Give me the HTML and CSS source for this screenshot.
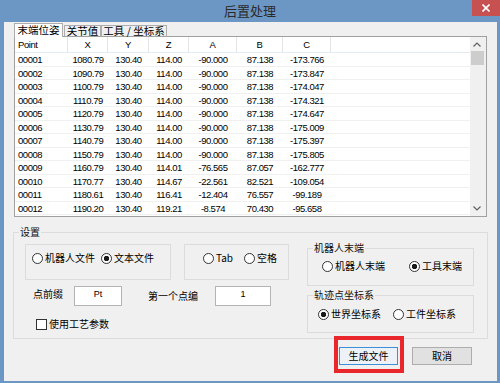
FILE: index.html
```html
<!DOCTYPE html>
<html>
<head>
<meta charset="utf-8">
<link rel="stylesheet" href="styles.css">
</head>
<body>
<div class="window">
  <div class="titlebar">
    <div class="title">后置处理</div>
    <div class="close"><svg width="8" height="8" viewBox="0 0 8 8"><path d="M0.5 0.5L7.5 7.5M7.5 0.5L0.5 7.5" stroke="#fff" stroke-width="1.6"/></svg></div>
  </div>
  <div class="client">
    <div class="tabs">
      <div class="tab active">末端位姿</div>
      <div class="tab t2">关节值</div>
      <div class="tab t3">工具 / 坐标系</div>
    </div>
    <div class="listview">
      <div class="lv-main">
        <div class="lv-head">
          <div class="hc first">Point</div><div class="hc">X</div><div class="hc">Y</div><div class="hc">Z</div><div class="hc">A</div><div class="hc">B</div><div class="hc">C</div><div class="hc fill"></div>
        </div>
        <div class="row"><div class="c first">00001</div><div class="c">1080.79</div><div class="c">130.40</div><div class="c">114.00</div><div class="c">-90.000</div><div class="c">87.138</div><div class="c">-173.766</div><div></div></div>
        <div class="row"><div class="c first">00002</div><div class="c">1090.79</div><div class="c">130.40</div><div class="c">114.00</div><div class="c">-90.000</div><div class="c">87.138</div><div class="c">-173.847</div><div></div></div>
        <div class="row"><div class="c first">00003</div><div class="c">1100.79</div><div class="c">130.40</div><div class="c">114.00</div><div class="c">-90.000</div><div class="c">87.138</div><div class="c">-174.047</div><div></div></div>
        <div class="row"><div class="c first">00004</div><div class="c">1110.79</div><div class="c">130.40</div><div class="c">114.00</div><div class="c">-90.000</div><div class="c">87.138</div><div class="c">-174.321</div><div></div></div>
        <div class="row"><div class="c first">00005</div><div class="c">1120.79</div><div class="c">130.40</div><div class="c">114.00</div><div class="c">-90.000</div><div class="c">87.138</div><div class="c">-174.647</div><div></div></div>
        <div class="row"><div class="c first">00006</div><div class="c">1130.79</div><div class="c">130.40</div><div class="c">114.00</div><div class="c">-90.000</div><div class="c">87.138</div><div class="c">-175.009</div><div></div></div>
        <div class="row"><div class="c first">00007</div><div class="c">1140.79</div><div class="c">130.40</div><div class="c">114.00</div><div class="c">-90.000</div><div class="c">87.138</div><div class="c">-175.397</div><div></div></div>
        <div class="row"><div class="c first">00008</div><div class="c">1150.79</div><div class="c">130.40</div><div class="c">114.00</div><div class="c">-90.000</div><div class="c">87.138</div><div class="c">-175.805</div><div></div></div>
        <div class="row"><div class="c first">00009</div><div class="c">1160.79</div><div class="c">130.40</div><div class="c">114.01</div><div class="c">-76.565</div><div class="c">87.057</div><div class="c">-162.777</div><div></div></div>
        <div class="row"><div class="c first">00010</div><div class="c">1170.77</div><div class="c">130.40</div><div class="c">114.67</div><div class="c">-22.561</div><div class="c">82.521</div><div class="c">-109.054</div><div></div></div>
        <div class="row"><div class="c first">00011</div><div class="c">1180.61</div><div class="c">130.40</div><div class="c">116.41</div><div class="c">-12.404</div><div class="c">76.557</div><div class="c">-99.189</div><div></div></div>
        <div class="row"><div class="c first">00012</div><div class="c">1190.20</div><div class="c">130.40</div><div class="c">119.21</div><div class="c">-8.574</div><div class="c">70.430</div><div class="c">-95.658</div><div></div></div>
      </div>
      <div class="scrollbar">
        <div class="sb-up"><svg width="8" height="5" viewBox="0 0 8 5"><path d="M0.5 4.5L4 1L7.5 4.5" fill="none" stroke="#606060" stroke-width="1.2"/></svg></div>
        <div class="sb-thumb"></div>
        <div class="sb-track"></div>
        <div class="sb-down"><svg width="8" height="5" viewBox="0 0 8 5"><path d="M0.5 0.5L4 4L7.5 0.5" fill="none" stroke="#606060" stroke-width="1.2"/></svg></div>
      </div>
    </div>

    <fieldset class="settings">
      <legend>设置</legend>
      <div class="settings-body">
        <div class="left">
          <div class="box-row">
            <div class="box box-file">
              <span class="radio"><span class="rb"></span>机器人文件</span>
              <span class="radio r-second"><span class="rb on"></span>文本文件</span>
            </div>
            <div class="box box-sep">
              <span class="radio"><span class="rb"></span>Tab</span>
              <span class="radio r-space"><span class="rb"></span>空格</span>
            </div>
          </div>
          <div class="field-row">
            <span class="lbl lbl1">点前缀</span>
            <span class="input in1">Pt</span>
            <span class="lbl lbl2">第一个点编</span>
            <span class="input in2">1</span>
          </div>
          <div class="check-row"><span class="cb"></span>使用工艺参数</div>
        </div>
        <div class="right">
          <fieldset class="grp grp1">
            <legend>机器人末端</legend>
            <div class="grp-body g1">
              <span class="radio"><span class="rb"></span>机器人末端</span>
              <span class="radio r-tool"><span class="rb on"></span>工具末端</span>
            </div>
          </fieldset>
          <fieldset class="grp grp2">
            <legend>轨迹点坐标系</legend>
            <div class="grp-body g2">
              <span class="radio"><span class="rb on"></span>世界坐标系</span>
              <span class="radio r-work"><span class="rb"></span>工件坐标系</span>
            </div>
          </fieldset>
        </div>
      </div>
    </fieldset>

    <div class="buttons">
      <div class="btn-wrap">
        <div class="btn primary">生成文件</div>
        <div class="highlight"></div>
      </div>
      <div class="btn">取消</div>
    </div>
  </div>
</div>
</body>
</html>
```
FILE: styles.css
```css
* { box-sizing: border-box; }
html, body { margin: 0; padding: 0; }
body {
  width: 500px;
  height: 383px;
  overflow: hidden;
  font-family: "Noto Sans CJK SC", "Noto Sans", sans-serif;
  font-size: 10px;
  color: #000;
}
.window {
  width: 500px;
  height: 383px;
  background: #6c97c5;
  display: flex;
  flex-direction: column;
}
.titlebar {
  height: 22px;
  flex: none;
  display: grid;
  grid-template-columns: 1fr auto 1fr;
}
.title {
  grid-column: 2;
  font-size: 13px;
  line-height: 22px;
  color: #2a2a2a;
}
.close {
  grid-column: 3;
  justify-self: end;
  align-self: start;
  width: 28px;
  height: 16px;
  background: #c75050;
  display: flex;
  align-items: center;
  justify-content: center;
}
.client {
  flex: 1;
  margin: 0 3px 2px 4px;
  background: #f0f0f0;
  display: flex;
  flex-direction: column;
}

/* tabs */
.tabs {
  display: flex;
  align-items: flex-start;
  height: 14px;
  margin: 1px 0 0 10px;
  position: relative;
  z-index: 1;
  flex: none;
}
.tab {
  height: 11px;
  margin-top: 2px;
  border: 1px solid #adadad;
  border-bottom: none;
  background: #f0f0f0;
  text-align: center;
  font-size: 10.5px;
  line-height: 10px;
  white-space: nowrap;
}
.tab.active {
  width: 49px;
  height: 14px;
  margin-top: 0;
  background: #fff;
  line-height: 12px;
}
.tab.t2 { width: 37px; margin-left: 1px; }
.tab.t3 { width: 66px; }

/* list view */
.listview {
  flex: none;
  margin: -1px 0 0 10px;
  width: 473px;
  height: 181px;
  border: 1px solid #a0a0a0;
  background: #fff;
  display: flex;
}
.lv-main {
  flex: 1;
  display: flex;
  flex-direction: column;
  font-family: "Liberation Sans", Arial, sans-serif;
  font-size: 9.5px;
  letter-spacing: -0.45px;
}
.lv-head, .row {
  display: grid;
  grid-template-columns: 53px 40px 41px 40px 48px 46px 48px 1fr;
}
.lv-head {
  height: 16px;
  border-bottom: 1px solid #e3eaf3;
}
.hc {
  border-right: 1px solid #e5e5e5;
  text-align: center;
  line-height: 15px;
  color: #000;
}
.hc.fill { border-right: none; }
.hc.first, .c.first { text-align: left; padding-left: 3px; }
.row {
  height: 13.5px;
  border-bottom: 1px solid #f0f0f0;
}
.c {
  text-align: center;
  line-height: 14px;
  color: #000;
}
.scrollbar {
  width: 16px;
  flex: none;
  background: #f0f0f0;
  display: flex;
  flex-direction: column;
}
.sb-up, .sb-down {
  display: flex;
  align-items: center;
  justify-content: center;
  padding-right: 2px;
}
.sb-up { height: 14px; }
.sb-down { height: 16px; }
.sb-thumb {
  height: 14px;
  margin: 0 2px 0 1px;
  background: #cdcdcd;
}
.sb-track { flex: 1; }

/* settings */
fieldset {
  margin: 0;
  padding: 0;
  min-width: 0;
  border: 1px solid #dcdcdc;
}
legend {
  padding: 0 1px;
  margin-left: 5px;
  font-size: 10px;
  line-height: 12px;
  color: #111;
}
.settings {
  flex: none;
  margin: 9px 0 0 9px;
  width: 475px;
}
.settings-body {
  height: 100px;
  padding: 4px 0 0 11px;
  display: flex;
}
.left {
  margin-top: 2px;
  width: 264px;
  display: flex;
  flex-direction: column;
}
.box-row { display: flex; height: 36px; }
.box {
  border: 1px solid #dcdcdc;
  height: 36px;
  display: flex;
  align-items: flex-start;
  padding-top: 7px;
}
.box-file { width: 146px; padding-left: 6px; }
.box-sep { width: 105px; margin-left: 13px; padding-left: 18px; }
.radio {
  display: inline-flex;
  align-items: center;
  line-height: 12px;
  height: 12px;
  white-space: nowrap;
}
.rb {
  width: 11px;
  height: 11px;
  border: 1px solid #333;
  border-radius: 50%;
  background: #fff;
  margin-right: 2px;
  flex: none;
}
.rb.on {
  background: radial-gradient(circle, #1a1a1a 0 2.4px, #fff 3px);
}
.r-second { margin-left: 6px; }
.r-space { margin-left: 11px; }
.r-tool { margin-left: 24px; }
.r-work { margin-left: 12px; }

.field-row {
  display: flex;
  align-items: center;
  height: 20px;
  margin-top: 6px;
}
.lbl { line-height: 12px; white-space: nowrap; }
.lbl1 { margin-left: 8px; margin-top: -4px; }
.lbl2 { margin-left: 26px; }
.input {
  height: 20px;
  border: 1px solid #b4b4b4;
  background: #fff;
  text-align: center;
  font-family: "Liberation Sans", Arial, sans-serif;
  font-size: 9px;
  line-height: 14px;
}
.in1 { width: 48px; margin-left: 11px; }
.in2 { width: 56px; margin-left: 17px; }
.check-row {
  display: flex;
  align-items: center;
  margin: 12px 0 0 11px;
  line-height: 12px;
}
.cb {
  width: 11px;
  height: 11px;
  border: 1px solid #333;
  background: #fff;
  margin-right: 2px;
}

.right {
  margin-left: 18px;
  width: 167px;
  display: flex;
  flex-direction: column;
}
.grp { width: 167px; }
.grp2 { margin-top: 3px; }
.grp-body { display: flex; }
.g1 { padding: 6px 0 13px 14px; }
.g2 { padding: 7px 0 12px 10px; }

/* buttons */
.buttons {
  flex: none;
  display: flex;
  justify-content: flex-end;
  margin-top: 8px;
  padding-right: 25px;
  gap: 14px;
}
.btn-wrap { position: relative; }
.btn {
  height: 18px;
  width: 60px;
  border: 1px solid #adadad;
  background: #e1e1e1;
  text-align: center;
  line-height: 16px;
  font-size: 10px;
}
.btn.primary {
  width: 59px;
  border-color: #3c8fd8;
  background: #ecf2f8;
}
.highlight {
  position: absolute;
  left: -5px;
  top: -11px;
  width: 70px;
  height: 37px;
  border: 4px solid #e8262b;
  z-index: 2;
}
```
